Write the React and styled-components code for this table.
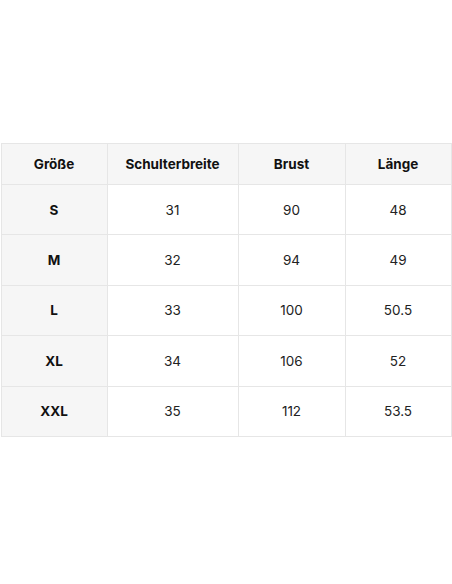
import React from "react";
import styled, { createGlobalStyle } from "styled-components";

const Global = createGlobalStyle`
  html, body { margin: 0; padding: 0; background: #ffffff; }
  body { font-family: Inter, "Liberation Sans", Arial, sans-serif; color: #1a1a1a; }
`;

const Page = styled.div`
  width: 452px;
  height: 584px;
  display: flex;
  align-items: flex-start;
  justify-content: center;
  padding-top: 143px;
  box-sizing: border-box;
`;

const Table = styled.table`
  width: 450px;
  border-collapse: collapse;
  table-layout: fixed;
  font-size: 13.5px;
  border: 1px solid #e6e6e6;
`;

const Th = styled.th`
  height: 41px;
  padding: 0;
  background: #f6f6f6;
  border: 1px solid #e6e6e6;
  font-weight: 700;
  text-align: center;
  box-sizing: border-box;
  color: #111;
`;

const Td = styled.td`
  height: 50.4px;
  padding: 0;
  border: 1px solid #e6e6e6;
  text-align: center;
  box-sizing: border-box;
  background: ${(p) => (p.$head ? "#f6f6f6" : "#ffffff")};
  font-weight: ${(p) => (p.$head ? 700 : 400)};
  color: ${(p) => (p.$head ? "#111" : "#222")};
`;

const cols = [106, 131, 107, 106];
const headers = ["Größe", "Schulterbreite", "Brust", "Länge"];
const rows = [
  ["S", "31", "90", "48"],
  ["M", "32", "94", "49"],
  ["L", "33", "100", "50.5"],
  ["XL", "34", "106", "52"],
  ["XXL", "35", "112", "53.5"],
];

export default function App() {
  return (
    <>
      <Global />
      <Page>
        <Table>
          <colgroup>
            {cols.map((w, i) => (
              <col key={i} style={{ width: w }} />
            ))}
          </colgroup>
          <thead>
            <tr>
              {headers.map((h) => (
                <Th key={h}>{h}</Th>
              ))}
            </tr>
          </thead>
          <tbody>
            {rows.map((r) => (
              <tr key={r[0]}>
                {r.map((c, i) => (
                  <Td key={i} $head={i === 0}>
                    {c}
                  </Td>
                ))}
              </tr>
            ))}
          </tbody>
        </Table>
      </Page>
    </>
  );
}
